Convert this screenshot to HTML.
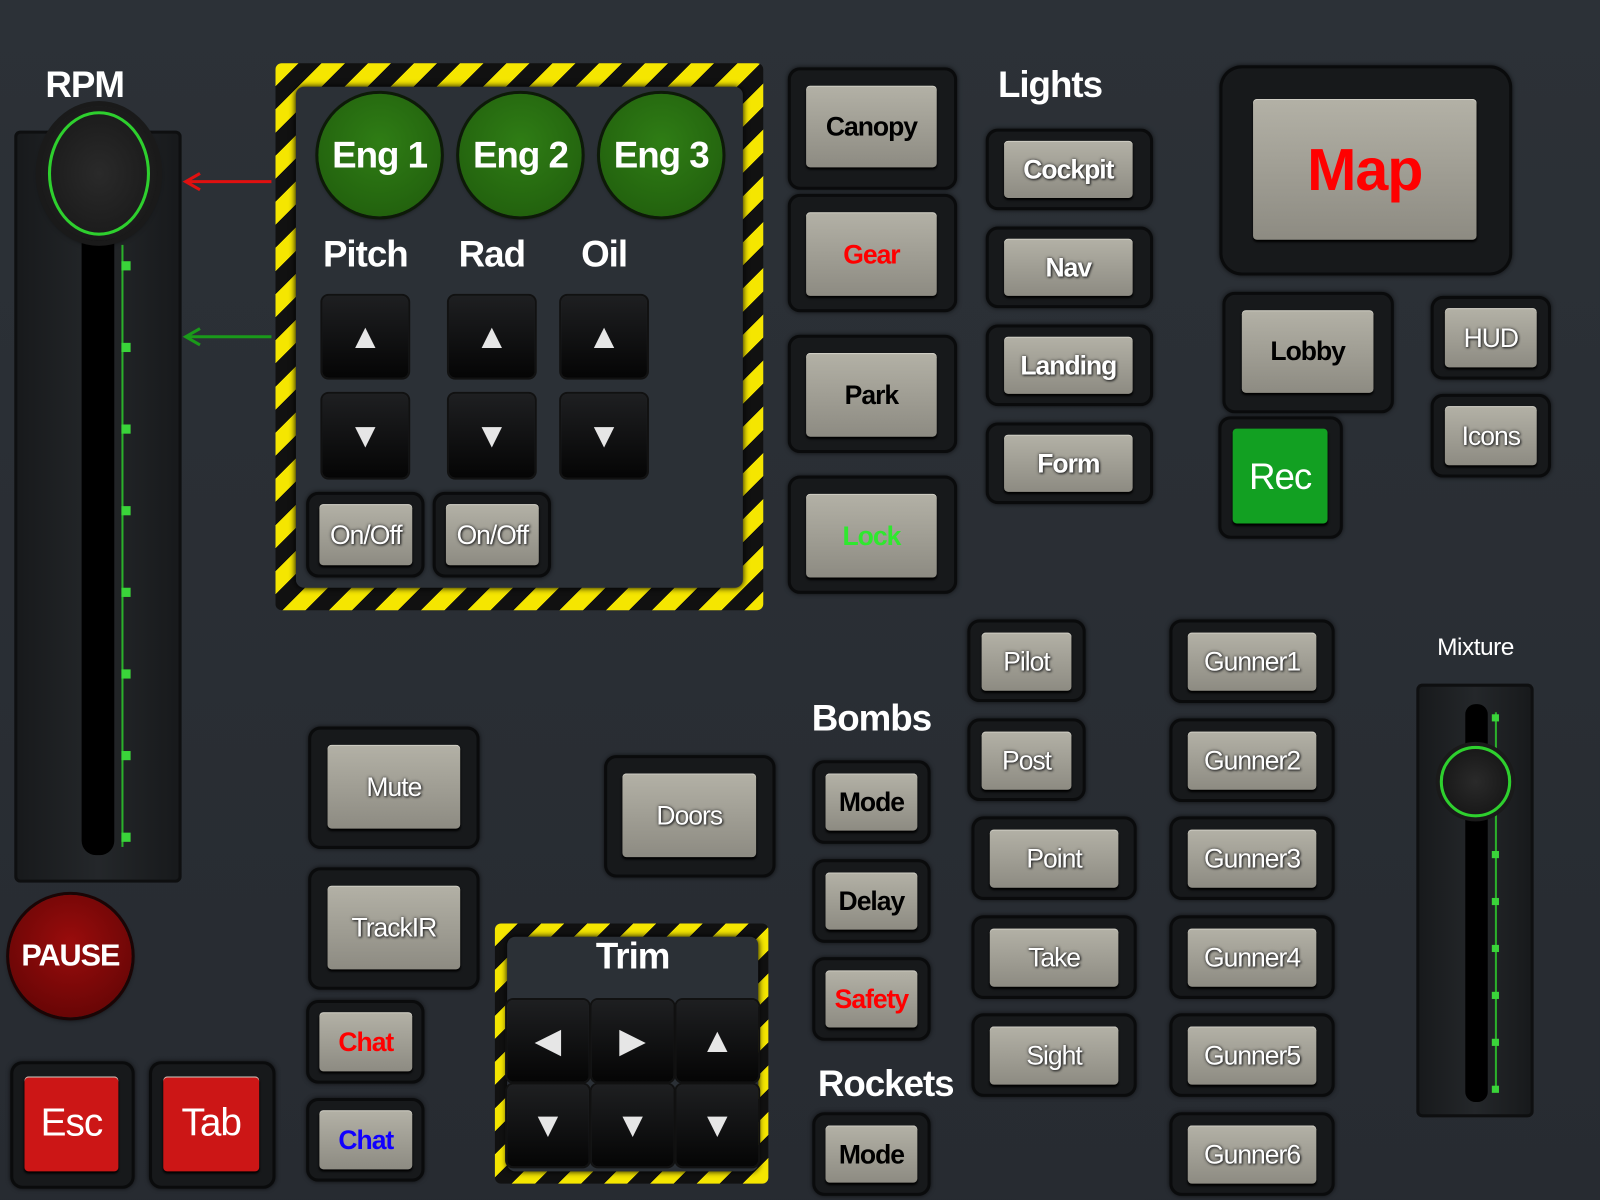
<!DOCTYPE html>
<html><head><meta charset="utf-8"><style>
html,body{margin:0;padding:0;background:#2a2f35;overflow:hidden}
#w{position:absolute;left:0;top:0;width:1568px;height:1176px;transform:scale(1.0204);transform-origin:0 0;background:linear-gradient(#2c3137,#272b31);font-family:"Liberation Sans",sans-serif}
.a{position:absolute}
.o{position:absolute;background:#17191b;border-radius:12px;box-shadow:inset 0 0 0 3px #0a0b0c,0 0 4px rgba(0,0,0,.6)}
.b{position:absolute;border-radius:4px;background:linear-gradient(#b3b1a6,#8d8b82);box-shadow:0 2px 2px #000,inset 0 1px 0 #cfcdc4;display:flex;align-items:center;justify-content:center;color:#fff;font-size:26px;letter-spacing:-1px;text-shadow:0 0 3px #333,1px 1px 2px #222}
.k{color:#000;font-weight:bold;text-shadow:none}
.t{position:absolute;color:#fff;font-weight:bold;font-size:36px;text-align:center;letter-spacing:-1px}
.hz{position:absolute;background:repeating-linear-gradient(135deg,#f5e600 0 16px,#111 16px 32px);border-radius:6px}
.in{position:absolute;background:#2b3036;border-radius:8px;box-shadow:0 0 6px #000}
.bk{position:absolute;background:linear-gradient(#1e1f21,#050505);border-radius:6px;box-shadow:0 0 0 2px #111;display:flex;align-items:center;justify-content:center;color:#e6e6e6;font-size:34px}
.eng{position:absolute;width:120px;height:120px;border-radius:50%;background:radial-gradient(circle at 50% 40%,#2f7d15,#1f5a0c);box-shadow:0 0 0 3px #0d1a08,0 2px 4px #000;display:flex;align-items:center;justify-content:center;color:#fff;font-weight:bold;font-size:36px;letter-spacing:-1px}
.tick{position:absolute;width:9px;height:9px;background:#3ad43a}
</style></head><body><div id="w">

<!-- RPM -->
<div class="t" style="left:30px;top:62px;width:106px">RPM</div>
<div class="a" style="left:14px;top:128px;width:164px;height:737px;background:linear-gradient(90deg,#17191b,#24272a,#17191b);border-radius:6px;box-shadow:inset 0 0 0 3px #0e0f10"></div>
<div class="a" style="left:80px;top:200px;width:32px;height:638px;background:#000;border-radius:14px"></div>
<div class="a" style="left:119px;top:240px;width:2px;height:590px;background:#2bb02b"></div>
<div class="tick" style="left:119px;top:256px"></div><div class="tick" style="left:119px;top:336px"></div><div class="tick" style="left:119px;top:416px"></div><div class="tick" style="left:119px;top:496px"></div><div class="tick" style="left:119px;top:576px"></div><div class="tick" style="left:119px;top:656px"></div><div class="tick" style="left:119px;top:736px"></div><div class="tick" style="left:119px;top:816px"></div>
<div class="a" style="left:40px;top:104px;width:114px;height:132px;border-radius:50%;background:radial-gradient(#2a2a2a,#141414);box-shadow:0 0 0 5px #1a1a1a,0 3px 6px #000"></div>
<div class="a" style="left:47px;top:109px;width:100px;height:122px;border-radius:50%;border:3px solid #2ed02e;box-sizing:border-box"></div>
<svg class="a" style="left:176px;top:160px" width="92" height="185"><path d="M90 18H8M20 10L6 18L20 26" stroke="#e01010" stroke-width="3" fill="none"/><path d="M90 170H8M20 162L6 170L20 178" stroke="#1a9a1a" stroke-width="3" fill="none"/></svg>

<!-- hazard engine box -->
<div class="hz" style="left:270px;top:62px;width:478px;height:536px"></div>
<div class="in" style="left:290px;top:85px;width:438px;height:491px"></div>
<div class="eng" style="left:312px;top:92px">Eng 1</div>
<div class="eng" style="left:450px;top:92px">Eng 2</div>
<div class="eng" style="left:588px;top:92px">Eng 3</div>
<div class="t" style="left:298px;top:228px;width:120px">Pitch</div>
<div class="t" style="left:422px;top:228px;width:120px">Rad</div>
<div class="t" style="left:532px;top:228px;width:120px">Oil</div>
<div class="bk" style="left:316px;top:290px;width:84px;height:80px">▲</div>
<div class="bk" style="left:440px;top:290px;width:84px;height:80px">▲</div>
<div class="bk" style="left:550px;top:290px;width:84px;height:80px">▲</div>
<div class="bk" style="left:316px;top:386px;width:84px;height:82px">▼</div>
<div class="bk" style="left:440px;top:386px;width:84px;height:82px">▼</div>
<div class="bk" style="left:550px;top:386px;width:84px;height:82px">▼</div>
<div class="o" style="left:300px;top:482px;width:116px;height:84px"></div><div class="b" style="left:313px;top:494px;width:91px;height:60px">On/Off</div>
<div class="o" style="left:424px;top:482px;width:116px;height:84px"></div><div class="b" style="left:437px;top:494px;width:91px;height:60px">On/Off</div>

<!-- column 1 -->
<div class="o" style="left:772px;top:66px;width:166px;height:120px"></div><div class="b k" style="left:790px;top:84px;width:128px;height:80px">Canopy</div>
<div class="o" style="left:772px;top:190px;width:166px;height:116px"></div><div class="b k" style="left:790px;top:208px;width:128px;height:82px;color:#f00">Gear</div>
<div class="o" style="left:772px;top:328px;width:166px;height:116px"></div><div class="b k" style="left:790px;top:346px;width:128px;height:82px">Park</div>
<div class="o" style="left:772px;top:466px;width:166px;height:116px"></div><div class="b k" style="left:790px;top:484px;width:128px;height:82px;color:#2fe82f">Lock</div>

<!-- lights -->
<div class="t" style="left:966px;top:62px;width:130px;text-align:left;padding-left:12px">Lights</div>
<div class="o" style="left:966px;top:126px;width:164px;height:80px"></div><div class="b" style="left:984px;top:138px;width:126px;height:56px;font-weight:bold">Cockpit</div>
<div class="o" style="left:966px;top:222px;width:164px;height:80px"></div><div class="b" style="left:984px;top:234px;width:126px;height:56px;font-weight:bold">Nav</div>
<div class="o" style="left:966px;top:318px;width:164px;height:80px"></div><div class="b" style="left:984px;top:330px;width:126px;height:56px;font-weight:bold">Landing</div>
<div class="o" style="left:966px;top:414px;width:164px;height:80px"></div><div class="b" style="left:984px;top:426px;width:126px;height:56px;font-weight:bold">Form</div>

<!-- map etc -->
<div class="o" style="left:1195px;top:64px;width:287px;height:206px;border-radius:22px"></div><div class="b" style="left:1228px;top:97px;width:219px;height:138px;color:#f00;font-weight:bold;font-size:58px;text-shadow:none">Map</div>
<div class="o" style="left:1198px;top:286px;width:168px;height:119px"></div><div class="b k" style="left:1217px;top:304px;width:129px;height:81px">Lobby</div>
<div class="o" style="left:1402px;top:290px;width:118px;height:82px"></div><div class="b" style="left:1416px;top:302px;width:90px;height:58px">HUD</div>
<div class="o" style="left:1402px;top:386px;width:118px;height:82px"></div><div class="b" style="left:1416px;top:398px;width:90px;height:58px">Icons</div>
<div class="o" style="left:1194px;top:408px;width:122px;height:120px"></div><div class="b" style="left:1208px;top:420px;width:93px;height:93px;background:#12a022;box-shadow:0 2px 2px #000;font-size:36px;text-shadow:none">Rec</div>

<!-- pilot etc -->
<div class="o" style="left:948px;top:607px;width:116px;height:81px"></div><div class="b" style="left:962px;top:620px;width:88px;height:57px">Pilot</div>
<div class="o" style="left:948px;top:704px;width:116px;height:81px"></div><div class="b" style="left:962px;top:717px;width:88px;height:57px">Post</div>
<div class="o" style="left:952px;top:800px;width:162px;height:82px"></div><div class="b" style="left:970px;top:813px;width:126px;height:57px">Point</div>
<div class="o" style="left:952px;top:897px;width:162px;height:82px"></div><div class="b" style="left:970px;top:910px;width:126px;height:57px">Take</div>
<div class="o" style="left:952px;top:993px;width:162px;height:82px"></div><div class="b" style="left:970px;top:1006px;width:126px;height:57px">Sight</div>

<div class="o" style="left:1146px;top:607px;width:162px;height:82px"></div><div class="b" style="left:1164px;top:620px;width:126px;height:57px">Gunner1</div>
<div class="o" style="left:1146px;top:704px;width:162px;height:82px"></div><div class="b" style="left:1164px;top:717px;width:126px;height:57px">Gunner2</div>
<div class="o" style="left:1146px;top:800px;width:162px;height:82px"></div><div class="b" style="left:1164px;top:813px;width:126px;height:57px">Gunner3</div>
<div class="o" style="left:1146px;top:897px;width:162px;height:82px"></div><div class="b" style="left:1164px;top:910px;width:126px;height:57px">Gunner4</div>
<div class="o" style="left:1146px;top:993px;width:162px;height:82px"></div><div class="b" style="left:1164px;top:1006px;width:126px;height:57px">Gunner5</div>
<div class="o" style="left:1146px;top:1090px;width:162px;height:82px"></div><div class="b" style="left:1164px;top:1103px;width:126px;height:57px">Gunner6</div>

<!-- bombs -->
<div class="t" style="left:784px;top:683px;width:140px">Bombs</div>
<div class="o" style="left:796px;top:745px;width:116px;height:82px"></div><div class="b k" style="left:809px;top:758px;width:90px;height:56px">Mode</div>
<div class="o" style="left:796px;top:842px;width:116px;height:82px"></div><div class="b k" style="left:809px;top:855px;width:90px;height:56px">Delay</div>
<div class="o" style="left:796px;top:938px;width:116px;height:82px"></div><div class="b k" style="left:809px;top:951px;width:90px;height:56px;color:#f00">Safety</div>
<div class="t" style="left:790px;top:1041px;width:156px">Rockets</div>
<div class="o" style="left:796px;top:1090px;width:116px;height:82px"></div><div class="b k" style="left:809px;top:1103px;width:90px;height:56px">Mode</div>

<!-- mixture -->
<div class="a" style="left:1386px;top:621px;width:120px;text-align:center;color:#fff;font-size:24px;letter-spacing:-0.5px">Mixture</div>
<div class="a" style="left:1388px;top:670px;width:115px;height:425px;background:linear-gradient(90deg,#17191b,#24272a,#17191b);border-radius:6px;box-shadow:inset 0 0 0 3px #0e0f10"></div>
<div class="a" style="left:1436px;top:690px;width:22px;height:390px;background:#000;border-radius:10px"></div>
<div class="a" style="left:1465px;top:698px;width:2px;height:372px;background:#2bb02b"></div>
<div class="tick" style="left:1462px;top:700px;width:7px;height:7px"></div><div class="tick" style="left:1462px;top:834px;width:7px;height:7px"></div><div class="tick" style="left:1462px;top:880px;width:7px;height:7px"></div><div class="tick" style="left:1462px;top:926px;width:7px;height:7px"></div><div class="tick" style="left:1462px;top:972px;width:7px;height:7px"></div><div class="tick" style="left:1462px;top:1018px;width:7px;height:7px"></div><div class="tick" style="left:1462px;top:1064px;width:7px;height:7px"></div>
<div class="a" style="left:1411px;top:731px;width:70px;height:70px;border-radius:50%;background:radial-gradient(#2a2a2a,#121212);border:3px solid #2ed02e;box-sizing:border-box;box-shadow:0 0 0 4px #1a1a1a"></div>

<!-- mute etc -->
<div class="o" style="left:302px;top:712px;width:168px;height:120px"></div><div class="b" style="left:321px;top:730px;width:130px;height:82px">Mute</div>
<div class="o" style="left:302px;top:850px;width:168px;height:120px"></div><div class="b" style="left:321px;top:868px;width:130px;height:82px">TrackIR</div>
<div class="o" style="left:592px;top:740px;width:168px;height:120px"></div><div class="b" style="left:610px;top:758px;width:131px;height:82px">Doors</div>
<div class="o" style="left:300px;top:980px;width:116px;height:82px"></div><div class="b k" style="left:313px;top:992px;width:91px;height:58px;color:#f00">Chat</div>
<div class="o" style="left:300px;top:1076px;width:116px;height:82px"></div><div class="b k" style="left:313px;top:1088px;width:91px;height:58px;color:#10f">Chat</div>

<!-- trim -->
<div class="hz" style="left:485px;top:905px;width:268px;height:255px"></div>
<div class="in" style="left:497px;top:918px;width:246px;height:230px"></div>
<div class="t" style="left:520px;top:916px;width:200px">Trim</div>
<div class="bk" style="left:497px;top:980px;width:80px;height:80px">◀</div>
<div class="bk" style="left:580px;top:980px;width:80px;height:80px">▶</div>
<div class="bk" style="left:663px;top:980px;width:80px;height:80px">▲</div>
<div class="bk" style="left:497px;top:1063px;width:80px;height:80px">▼</div>
<div class="bk" style="left:580px;top:1063px;width:80px;height:80px">▼</div>
<div class="bk" style="left:663px;top:1063px;width:80px;height:80px">▼</div>

<!-- pause/esc/tab -->
<div class="a" style="left:9px;top:877px;width:120px;height:120px;border-radius:50%;background:radial-gradient(circle at 50% 40%,#9a0c0c,#5a0404);box-shadow:0 0 0 3px #1a0505,0 2px 5px #000;display:flex;align-items:center;justify-content:center;color:#fff;font-weight:bold;font-size:30px;letter-spacing:-1px">PAUSE</div>
<div class="o" style="left:10px;top:1040px;width:122px;height:125px"></div><div class="b" style="left:24px;top:1055px;width:92px;height:93px;background:#cc1616;font-size:38px;text-shadow:none">Esc</div>
<div class="o" style="left:146px;top:1040px;width:124px;height:125px"></div><div class="b" style="left:160px;top:1055px;width:94px;height:93px;background:#cc1616;font-size:38px;text-shadow:none">Tab</div>

</div></body></html>
